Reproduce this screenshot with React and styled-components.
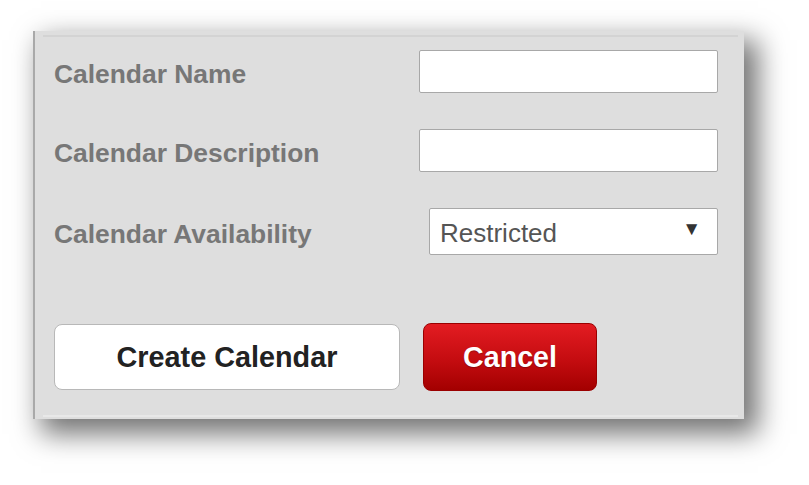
import React from 'react';
import styled, { createGlobalStyle } from 'styled-components';

const GlobalStyle = createGlobalStyle`
  html, body {
    margin: 0;
    padding: 0;
    background: #ffffff;
  }
  body {
    font-family: "Liberation Sans", Arial, sans-serif;
  }
`;

const Page = styled.div`
  width: 809px;
  height: 485px;
  padding: 31px 0 0 33px;
  box-sizing: border-box;
`;

const Panel = styled.div`
  position: relative;
  width: 711px;
  height: 388px;
  box-sizing: border-box;
  background: #dedede;
  border-left: 2px solid #a9a9a9;
  padding: 19px 26px 0 19px;
  box-shadow: 11px 12px 26px 3px rgba(0, 0, 0, 0.55);

  &::before,
  &::after {
    content: '';
    position: absolute;
    left: 8px;
    right: 6px;
    height: 2px;
  }
  &::before {
    top: 4px;
    background: #d3d3d3;
  }
  &::after {
    bottom: 2px;
    background: #e8e8e8;
  }
`;

const Rows = styled.div`
  display: flex;
  flex-direction: column;
  gap: 36px;
`;

const Row = styled.div`
  display: grid;
  grid-template-columns: 1fr 299px;
  align-items: center;
`;

const Label = styled.label`
  font-size: 26.4px;
  font-weight: 700;
  color: #777777;
  padding-top: 5px;
`;

const TextInput = styled.input`
  height: 43px;
  box-sizing: border-box;
  border: 1px solid #a8a8a8;
  border-radius: 2px;
  background: #ffffff;
  font-family: "Liberation Sans", Arial, sans-serif;
  font-size: 22px;
  padding: 0 10px;
  outline: none;
`;

const Select = styled.div`
  margin-left: 10px;
  height: 47px;
  box-sizing: border-box;
  border: 1px solid #a8a8a8;
  border-radius: 2px;
  background: #ffffff;
  display: flex;
  align-items: center;
  justify-content: space-between;
  padding: 3px 16px 0 10px;
  font-size: 26px;
  color: #555555;
`;

const Arrow = styled.span`
  font-size: 19px;
  color: #333333;
  margin-top: -9px;
`;

const Actions = styled.div`
  display: flex;
  gap: 23px;
  margin-top: 68px;
  align-items: center;
`;

const Button = styled.button`
  box-sizing: border-box;
  border-radius: 8px;
  font-family: "Liberation Sans", Arial, sans-serif;
  font-size: ${(p) => (p.$danger ? '28.6px' : '28.8px')};
  font-weight: 700;
  cursor: pointer;
  width: ${(p) => (p.$danger ? '174px' : '346px')};
  height: ${(p) => (p.$danger ? '68px' : '66px')};
  color: ${(p) => (p.$danger ? '#ffffff' : '#222222')};
  border: 1px solid ${(p) => (p.$danger ? '#9a0000' : '#b8b8b8')};
  background: ${(p) =>
    p.$danger ? 'linear-gradient(180deg, #e31c22 0%, #c40c10 55%, #a30000 100%)' : '#ffffff'};
  text-shadow: ${(p) => (p.$danger ? '0 1px 1px rgba(0,0,0,0.25)' : 'none')};
  padding: 0;
`;

export default function App() {
  return (
    <>
      <GlobalStyle />
      <Page>
        <Panel>
          <Rows>
            <Row>
              <Label>Calendar Name</Label>
              <TextInput type="text" />
            </Row>
            <Row>
              <Label>Calendar Description</Label>
              <TextInput type="text" />
            </Row>
            <Row>
              <Label>Calendar Availability</Label>
              <Select>
                <span>Restricted</span>
                <Arrow>▼</Arrow>
              </Select>
            </Row>
          </Rows>
          <Actions>
            <Button>Create Calendar</Button>
            <Button $danger>Cancel</Button>
          </Actions>
        </Panel>
      </Page>
    </>
  );
}
